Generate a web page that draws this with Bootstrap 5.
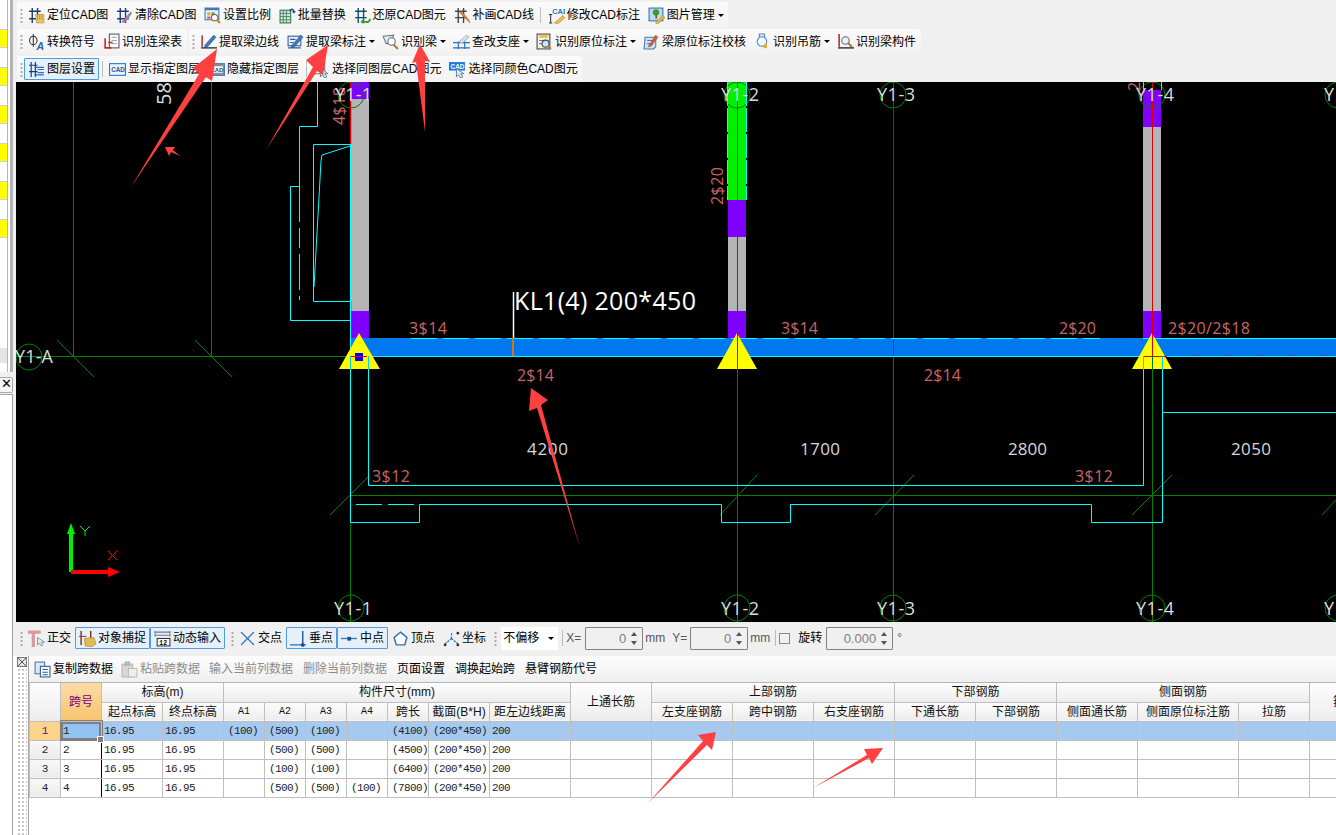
<!DOCTYPE html>
<html lang="zh">
<head>
<meta charset="utf-8">
<title>GCL</title>
<link href="https://cdn.jsdelivr.net/npm/bootstrap@5.3.0/dist/css/bootstrap.min.css" rel="stylesheet">
<style>
html,body{height:835px;overflow:hidden;background:#f0f0f0;}
body{font-family:"Liberation Sans","Noto Sans CJK SC",sans-serif;font-size:12px;color:#000;position:relative;}
.app{width:1336px;height:835px;}
/* left dock */
.dock{width:13px;flex:none;}
.dock-top{height:372px;border-right:3px solid #b4b4b4;box-shadow:inset -2px 0 0 #fff;position:relative;padding-right:3px;background:#fff;}
.dock-top::after{content:"";position:absolute;right:2px;top:0;bottom:0;width:1px;background:#b4b4b4;}
.yc{height:19px;background:#ff0;margin-bottom:19px;border-top:1px solid #d0d0d0;border-bottom:1px solid #d0d0d0;}
.yc:first-child{margin-top:29px;}
.gc{height:15px;background:#e4e4e4;margin-top:110px;}
.dock-x{height:16px;margin-top:5px;border:1px solid #a8a8a8;border-left:0;border-radius:0 2px 2px 0;background:#f4f4f4;line-height:12px;text-align:center;font-size:13px;}
.dock-low{flex:1;margin-top:1px;background:#fff;border-right:1px solid #a0a0a0;border-top:1px solid #a0a0a0;}
/* toolbars */
.main{flex:1;min-width:0;}
.rows{height:82px;padding:2px 0 0 4px;}
.tbar{background:linear-gradient(#fbfbfb,#f2f2f2);border-radius:3px;padding-left:3px;}
.h26{height:26px}.h25{height:25px}
.r1{width:711px;margin-bottom:1px}
.r1 .tool{margin-right:-.3px}
.r2a{width:170px}.r2b{width:732px;margin-left:2px}
.r2{margin-bottom:2px}
.r3{width:565px}
.grip{width:3px;height:15px;flex:none;margin-right:1px;background:radial-gradient(circle,#a8a8a8 1px,transparent 1.2px) 0 0/3px 4px;}
.tool.btn{--bs-btn-padding-x:3px;--bs-btn-padding-y:0;--bs-btn-font-size:12px;--bs-btn-border-radius:1px;--bs-btn-line-height:1;display:flex;align-items:center;gap:2px;height:22px;white-space:nowrap;color:#000;border:1px solid transparent;flex:none;}
.tool.on{border-color:#4f9ce6;background:#e6f0fb;}
.tool.off{color:#8c8c8c;}
.tool.dropdown-toggle{--bs-btn-padding-x:3px;padding-right:2px;}
.tool.dropdown-toggle::after{border-width:3px 3px 0;margin-left:1px;}
.ico{width:17px;height:17px;flex:none;display:block;}
.vsep{width:1px;height:16px;background:#bdbdbd;flex:none;margin:0 2.5px;}
/* cad */
.cad{display:block;margin-left:3px;width:1320px;height:540px;background:#000;font-family:"Open Sans","Noto Sans",sans-serif;}
.cad text{font-size:16px;fill:#c86464;}
.cad text.ax{font-size:18px;fill:#dcdcdc;}
.cad text.dm{font-size:17px;fill:#d8d8d8;}
.cad .gl{stroke:#008000;stroke-width:1;fill:none;}
.cad .cy{stroke:#00ffff;stroke-width:1;fill:none;}
.cad .rd{stroke:#d80000;stroke-width:1;fill:none;}
/* snap */
.snap{height:34px;padding:0 0 2px 0;}
.lbl{color:#555;flex:none;}
.gap2{margin-left:2px}.gap3{margin-left:3px}.gap6{margin-left:6px}.gap7{margin-left:7px}
.sep-a{margin:0 3px 0 4px;}
.sep-b{margin:0 3px 0 5px;}
.spin{height:23px;border:1px solid #828282;border-radius:1px;background:#f0f0f0;color:#808080;font-size:13px;padding-right:16px;text-align:right;line-height:21px;position:relative;flex:none;}
.spin::before,.spin::after{content:"";position:absolute;right:5px;border-left:3px solid transparent;border-right:3px solid transparent;}
.spin::before{top:4px;border-bottom:4px solid #555;}
.spin::after{bottom:4px;border-top:4px solid #555;}
.chk.form-check-input{width:11px;height:11px;margin:0;border-radius:0;border-color:#888;background-color:#f0f0f0;flex:none;}
.dropsel{width:57px;height:23px;background:#fff;padding-left:2px;flex:none;}
/* lower */
.lower{height:179px;background:#fff;}
.gutter{width:15px;flex:none;position:relative;padding:10px 1px 0 4px;}
.dots{position:absolute;left:4px;right:1px;top:12px;bottom:0;background:radial-gradient(circle,#c9c9c9 1px,transparent 1.1px) 0 0/4px 4px;}
.closeb{position:absolute;left:4px;top:1px;width:10px;height:10px;display:block;}
.tablepane{flex:1;min-width:0;overflow:hidden;border-left:1px solid #a8a8a8;}
.ttools{height:27px;background:linear-gradient(#fdfdfd,#efefef);border-bottom:1px solid #b4b4b4;margin-left:-1px;padding-left:2px;}
.ttools .tool.btn{height:20px;padding:0 3px;margin-right:2px;}
.ttools .tool.btn:first-child{margin-right:0;}
.ttools .tool.btn:nth-child(2){margin-right:1px;}
.gridbox{overflow:hidden;width:1307px;}
table.spans{table-layout:fixed;width:1351px;margin:0;border-collapse:collapse;font-size:12px;--bs-table-bg:transparent;}
table.spans th,table.spans td{height:19px;padding:0;border:1px solid #bfbfbf;line-height:18px;font-weight:400;white-space:nowrap;overflow:hidden;vertical-align:middle;}
table.spans thead th{background:linear-gradient(#fdfdfd,#ececec);text-align:center;color:#111;}
table.spans thead tr:first-child th{border-top:0;}
table.spans th.cur{background:linear-gradient(#fbdca6,#f5c46e);color:#800080;}
table.spans tbody th{background:linear-gradient(#f8f8f8,#ebebeb);text-align:center;font-family:"Liberation Mono",monospace;font-size:11px;line-height:17px;padding-top:1px;}
table.spans td{font-family:"Liberation Mono","Noto Sans CJK SC",monospace;font-size:11px;letter-spacing:-.6px;line-height:17px;padding:1px 0 0 2px;}
table.spans td.pn{padding-left:4px;}
table.spans .sel td{background:#a6c9ef;}
table.spans .sel th{background:#fbd38a;color:#800080;}
table.spans td.act{background:#92c2f2;box-shadow:inset 0 0 0 2px #7f7f7f;outline:1px solid #7f7f7f;outline-offset:0;position:relative;overflow:visible;z-index:2;}
table.spans td.act::after{content:"";position:absolute;right:-3px;bottom:-3px;width:5px;height:5px;background:#7f7f7f;border:1px solid #fff;box-sizing:content-box;}
table.spans td.blk{border-right:1px solid #000;}
.mini{font-family:"Liberation Mono",monospace;font-size:10px;font-weight:700;}
.overlay{position:absolute;left:0;top:0;pointer-events:none;z-index:5;}
</style>
</head>
<body>
<svg width="0" height="0" class="position-absolute">
<defs>
<symbol id="hand" viewBox="0 0 16 16"><path d="M4 1v14M9 1v14M1 4h11M1 11h11" stroke="#1d3a78" stroke-width="1.3" fill="none"/><path d="M7 7h8v8H8z" fill="#e8c868" stroke="#b89238" stroke-width=".6"/><path d="M9 7v5M11 7v5M13 7v5" stroke="#a8842c" stroke-width=".7"/></symbol>
<symbol id="brush" viewBox="0 0 16 16"><path d="M4 1v14M9 1v14M1 4h11M1 11h11" stroke="#1d3a78" stroke-width="1.3" fill="none"/><path d="M14 4 8 11l2 2 5-7z" fill="#8a8aa8"/><path d="M8 11l2 2-3 2-2-1z" fill="#d060a0"/></symbol>
<symbol id="ratio" viewBox="0 0 16 16"><rect x="1" y="1" width="13" height="11" fill="#eaf2fb" stroke="#3f78b8"/><rect x="1" y="1" width="13" height="2" fill="#3f78b8"/><rect x="3" y="5" width="3" height="3" fill="#e8a838"/><rect x="7" y="5" width="3" height="3" fill="#58a858"/><rect x="3" y="9" width="3" height="2" fill="#c85858"/><circle cx="10" cy="10" r="3" fill="#fff" stroke="#806020"/><path d="m12 12 3 3" stroke="#b88a2c" stroke-width="2"/></symbol>
<symbol id="batch" viewBox="0 0 16 16"><rect x="1" y="3" width="10" height="12" fill="#cfe8d8" stroke="#3c6f4f"/><path d="M1 6h10M1 9h10M1 12h10M4 3v12M7 3v12" stroke="#3c7f5f" stroke-width=".8"/><path d="M10 4c2-3 4-2 4 1" stroke="#0a4f7f" stroke-width="1.4" fill="none"/><path d="m12 4 2 2 2-2" fill="#0a4f7f"/></symbol>
<symbol id="restore" viewBox="0 0 16 16"><path d="M4 1v14M9 1v14M1 4h11M1 10h11" stroke="#0f4f68" stroke-width="1.3" fill="none"/><path d="M15 11a3 3 0 0 1-4 3H8" stroke="#3aa02a" stroke-width="1.8" fill="none"/><path d="m9 11-3 3 3 2z" fill="#3aa02a"/></symbol>
<symbol id="draw" viewBox="0 0 16 16"><path d="M4 1v14M9 1v14M1 4h11M1 10h11" stroke="#444" stroke-width="1.3" fill="none"/><path d="m5 5 8 8 2 2-1-3-7-8z" fill="#d88a3c" stroke="#8a5a24" stroke-width=".4"/></symbol>
<symbol id="cadmod" viewBox="0 0 16 16"><text x="4" y="6.5" font-size="7" font-weight="700" fill="#2a6fc0" font-family="Liberation Sans">CAD</text><path d="M1 7h3M2.500 7v8M1 15h3" stroke="#333" fill="none"/><path d="m6 15 8-7 2 2-7 6z" fill="#e8c050" stroke="#a88020" stroke-width=".5"/></symbol>
<symbol id="pic" viewBox="0 0 16 16"><rect x="1" y="1" width="13" height="12" fill="#bcd8f4" stroke="#3a6fb0"/><circle cx="7.500" cy="5" r="3" fill="#3a9a2a"/><rect x="7" y="7" width="1.500" height="4" fill="#7a5a2a"/><path d="m7 15 7-7 2 2-7 6z" fill="#e8b83c" stroke="#a07820" stroke-width=".5"/></symbol>
<symbol id="phi" viewBox="0 0 16 16"><path d="M5 1v12" stroke="#333"/><ellipse cx="5" cy="7" rx="3.500" ry="4" fill="none" stroke="#333"/><text x="8" y="16" font-size="10" font-weight="700" font-style="italic" fill="#2a62b8" font-family="Liberation Sans">A</text></symbol>
<symbol id="ltab" viewBox="0 0 16 16"><rect x="6" y="1" width="9" height="13" fill="#fff" stroke="#556"/><path d="M8 4h5M8 7h5M8 10h5" stroke="#89a" stroke-width=".9"/><path d="M2 5v9h6M5 9h4" stroke="#c8281c" stroke-width="1.5" fill="none"/></symbol>
<symbol id="edge" viewBox="0 0 16 16"><path d="M2 2v11" stroke="#b02020" stroke-width="1.300"/><path d="M1 14h15" stroke="#333" stroke-width="1.300"/><path d="m5 11 8-9 2 2-8 9-3 1z" fill="#3c7cc0" stroke="#1c4c88" stroke-width=".6"/></symbol>
<symbol id="mark" viewBox="0 0 16 16"><rect x="1" y="3" width="12" height="9" fill="#e8f0fa" stroke="#2c5c98"/><path d="M3 6h5M3 9h3M1 14h12" stroke="#2c5c98"/><path d="m5 11 8-9 2 2-8 9-3 1z" fill="#3c7cc0" stroke="#1c4c88" stroke-width=".6"/></symbol>
<symbol id="beamf" viewBox="0 0 16 16"><path d="m1 3 10-1-3 8-4 0z" fill="#e8eef4" stroke="#6a7a8a"/><circle cx="9" cy="8" r="3.500" fill="#fff" stroke="#5a6a7a"/><path d="m11 11 4 4" stroke="#b07c2c" stroke-width="2"/></symbol>
<symbol id="supp" viewBox="0 0 16 16"><path d="M0 9h16M0 14h16M5 8v7M11 8v7" stroke="#2a6fc0" stroke-width="1.100"/><path d="m6 8 7-6 2 2-7 6z" fill="#dfe4ea" stroke="#8a96a4" stroke-width=".7"/></symbol>
<symbol id="orig" viewBox="0 0 16 16"><rect x="1" y="1" width="12" height="14" fill="#f8f4e0" stroke="#444"/><rect x="3" y="2" width="8" height="2.500" fill="#e8c040"/><path d="M3 7h6M3 10h3" stroke="#778" /><circle cx="9" cy="10" r="3.300" fill="#cfe4f8" stroke="#3a4a5a"/><path d="m11 12 3 3" stroke="#b07c2c" stroke-width="2"/></symbol>
<symbol id="check" viewBox="0 0 16 16"><path d="M2 4h10v9l-2 2H1z" fill="#cfe0f4" stroke="#4a78b0"/><path d="M4 7h5M4 10h4" stroke="#4a78b0"/><path d="m6 11 6-9 2 2-6 8-3 1z" fill="#d85c38" stroke="#983c20" stroke-width=".5"/></symbol>
<symbol id="hang" viewBox="0 0 16 16"><path d="M5 1h5v3H5z" fill="#e4eef8" stroke="#5a86b8"/><circle cx="7.500" cy="8" r="4.500" fill="#f2f8ff" stroke="#5a86b8"/><circle cx="10.500" cy="12.500" r="2" fill="#e8b020"/></symbol>
<symbol id="comp" viewBox="0 0 16 16"><path d="M2 1v12" stroke="#b02020" stroke-width="1.400"/><path d="M1 14h15" stroke="#333" stroke-width="1.400"/><circle cx="8" cy="7" r="3.500" fill="#eaf2fa" stroke="#5a6a7a"/><path d="m10 9 4 4" stroke="#b07c2c" stroke-width="2"/></symbol>
<symbol id="layer" viewBox="0 0 16 16"><path d="M3 1v14M7 1v14M1 4h8M1 10h8" stroke="#1d3a78" stroke-width="1.100" fill="none"/><path d="M6 6h9M9 8h6M9 11h6M6 13h9" stroke="#2a6fc0" stroke-width="1.100"/></symbol>
<symbol id="cadb" viewBox="0 0 16 16"><rect x=".5" y="2.500" width="15" height="11" fill="#eaf4ff" stroke="#1e78d0"/><text x="2" y="10.500" font-size="6" font-weight="700" fill="#1e5aa0" font-family="Liberation Sans">CAD</text></symbol>
<symbol id="cadh" viewBox="0 0 16 16"><rect x=".5" y="2.500" width="15" height="11" fill="#8a9098" stroke="#4a78b0"/><rect x="2" y="5" width="12" height="6" fill="#fff"/><text x="2.500" y="10" font-size="5.500" font-weight="700" fill="#345" font-family="Liberation Sans">CAD</text></symbol>
<symbol id="sel1" viewBox="0 0 16 16"><rect x="1" y="1" width="10" height="11" fill="#f4f8fc" stroke="#6a7a8a"/><path d="M3 4h6M3 7h6" stroke="#c85050"/><path d="m7 6 0 9 2-2 2 3 2-1-2-3 3 0z" fill="#dfeaf6" stroke="#52708c" stroke-width=".8"/></symbol>
<symbol id="sel2" viewBox="0 0 16 16"><rect x="0" y="1" width="15" height="8" fill="#1e78e0"/><text x="1.500" y="7.500" font-size="6" font-weight="700" fill="#fff" font-family="Liberation Sans">CAD</text><path d="m7 7 0 8 2-2 2 3 2-1-2-3 3 0z" fill="#dfeaf6" stroke="#52708c" stroke-width=".8"/></symbol>
<symbol id="ortho" viewBox="0 0 16 16"><path d="M0 2h12M5 2v14" stroke="#d89a9a" stroke-width="3" fill="none"/><path d="m9 7 0 7 2-1.500 1.500 2.500 1.500-1-1.500-2.500h3z" fill="#e8eef4" stroke="#6a7684" stroke-width=".7"/></symbol>
<symbol id="osnap" viewBox="0 0 16 16"><path d="M2 1v13M11 1v7" stroke="#6a3010" stroke-width="1.300"/><path d="M0 6h7" stroke="#c03020" stroke-width="1"/><path d="m5 8 9-1 2 6-4 3-6-1z" fill="#e0bc58" stroke="#a08428" stroke-width=".6"/></symbol>
<symbol id="dyn" viewBox="0 0 16 16"><path d="M1 2h14M1 5h14M1 1v5M15 1v5" stroke="#778" fill="none"/><rect x="3" y="8" width="12" height="7" fill="#fff" stroke="#333"/><text x="5" y="14" font-size="6" font-family="Liberation Mono" font-weight="700">12</text></symbol>
<symbol id="xpt" viewBox="0 0 16 16"><path d="m2 2 12 12M14 2 2 14" stroke="#1f6fb8" stroke-width="1.300"/></symbol>
<symbol id="perp" viewBox="0 0 16 16"><path d="M0 14h15" stroke="#3a7ec0" stroke-width="1.300"/><path d="M12 1v13" stroke="#1f4f88" stroke-width="1.300"/><circle cx="12" cy="14" r="1.800" fill="#1f4f88"/></symbol>
<symbol id="midp" viewBox="0 0 16 16"><path d="M0 8h15" stroke="#3a7ec0" stroke-width="1.300"/><rect x="6" y="6.500" width="3.500" height="3.500" fill="#1f4f88"/></symbol>
<symbol id="vtx" viewBox="0 0 16 16"><path d="m8 2 6 5-2 7H4L2 7z" fill="#fff" stroke="#2a72bc" stroke-width="1.400"/></symbol>
<symbol id="coord" viewBox="0 0 16 16"><path d="M8 8V2M8 8l6 5M8 8l-6 5" stroke="#2a72bc" stroke-width="1.200" stroke-dasharray="2 1"/><circle cx="14" cy="3" r="1.300" fill="#333"/><circle cx="2" cy="14" r="1.300" fill="#333"/><circle cx="14" cy="14" r="1.300" fill="#333"/></symbol>
<symbol id="copy" viewBox="0 0 16 16"><rect x="1" y="1" width="9" height="11" fill="#dce8f6" stroke="#4a78b0"/><rect x="6" y="5" width="9" height="10" fill="#fff" stroke="#2a5a98"/><path d="M8 8h5M8 10.500h5M8 13h5" stroke="#2a5a98"/></symbol>
<symbol id="paste" viewBox="0 0 16 16"><rect x="1" y="3" width="10" height="12" fill="#d8d8d8" stroke="#b4b4b4"/><rect x="4" y="1" width="4" height="3" fill="#c4c4c4" stroke="#a8a8a8"/><rect x="7" y="7" width="8" height="8" fill="#eee" stroke="#bcbcbc"/></symbol>
</defs>
</svg>

<div class="app d-flex">
  <aside class="dock d-flex flex-column">
    <div class="dock-top">
      <div class="yc"></div><div class="yc"></div><div class="yc"></div><div class="yc"></div><div class="yc"></div><div class="yc"></div>
      <div class="gc"></div>
    </div>
    <div class="dock-x">✕</div>
    <div class="dock-low"></div>
  </aside>

  <div class="main d-flex flex-column">
    <div class="rows">
      <div class="tbar r1 h26 d-flex align-items-center">
        <span class="grip"></span>
        <button class="btn tool"><svg class="ico"><use href="#hand"/></svg>定位CAD图</button>
        <button class="btn tool"><svg class="ico"><use href="#brush"/></svg>清除CAD图</button>
        <button class="btn tool"><svg class="ico"><use href="#ratio"/></svg>设置比例</button>
        <button class="btn tool"><svg class="ico"><use href="#batch"/></svg>批量替换</button>
        <button class="btn tool"><svg class="ico"><use href="#restore"/></svg>还原CAD图元</button>
        <button class="btn tool"><svg class="ico"><use href="#draw"/></svg>补画CAD线</button>
        <span class="vsep"></span>
        <button class="btn tool"><svg class="ico"><use href="#cadmod"/></svg>修改CAD标注</button>
        <button class="btn tool dropdown-toggle"><svg class="ico"><use href="#pic"/></svg>图片管理</button>
      </div>
      <div class="r2 h25 d-flex">
        <div class="tbar r2a d-flex align-items-center">
          <span class="grip"></span>
          <button class="btn tool"><svg class="ico"><use href="#phi"/></svg>转换符号</button>
          <button class="btn tool"><svg class="ico"><use href="#ltab"/></svg>识别连梁表</button>
        </div>
        <div class="tbar r2b d-flex align-items-center">
          <span class="grip"></span>
          <button class="btn tool"><svg class="ico"><use href="#edge"/></svg>提取梁边线</button>
          <button class="btn tool dropdown-toggle"><svg class="ico"><use href="#mark"/></svg>提取梁标注</button>
          <button class="btn tool dropdown-toggle"><svg class="ico"><use href="#beamf"/></svg>识别梁</button>
          <button class="btn tool dropdown-toggle"><svg class="ico"><use href="#supp"/></svg>查改支座</button>
          <button class="btn tool dropdown-toggle"><svg class="ico"><use href="#orig"/></svg>识别原位标注</button>
          <button class="btn tool"><svg class="ico"><use href="#check"/></svg>梁原位标注校核</button>
          <button class="btn tool dropdown-toggle"><svg class="ico"><use href="#hang"/></svg>识别吊筋</button>
          <button class="btn tool"><svg class="ico"><use href="#comp"/></svg>识别梁构件</button>
        </div>
      </div>
      <div class="tbar r3 h26 d-flex align-items-center">
        <span class="grip"></span>
        <button class="btn tool on"><svg class="ico"><use href="#layer"/></svg>图层设置</button>
        <span class="vsep"></span>
        <button class="btn tool"><svg class="ico"><use href="#cadb"/></svg>显示指定图层</button>
        <button class="btn tool"><svg class="ico"><use href="#cadh"/></svg>隐藏指定图层</button>
        <span class="vsep"></span>
        <button class="btn tool"><svg class="ico"><use href="#sel1"/></svg>选择同图层CAD图元</button>
        <button class="btn tool"><svg class="ico"><use href="#sel2"/></svg>选择同颜色CAD图元</button>
      </div>
    </div>

    <svg class="cad" viewBox="16 82 1320 540" xmlns="http://www.w3.org/2000/svg">
      <rect x="351" y="338" width="985" height="18" fill="#0078f0"/>
      <rect x="351" y="99" width="18" height="212" fill="#b4b4b4"/>
      <rect x="351" y="82" width="18" height="17" fill="#7f00ff"/>
      <rect x="351" y="311" width="18" height="27" fill="#7f00ff"/>
      <rect x="728" y="82" width="18" height="118" fill="#00f000"/>
      <rect x="728" y="200" width="18" height="37" fill="#7f00ff"/>
      <rect x="728" y="237" width="18" height="74" fill="#b4b4b4"/>
      <rect x="728" y="311" width="18" height="27" fill="#7f00ff"/>
      <rect x="1143" y="90" width="18" height="37" fill="#7f00ff"/>
      <rect x="1143" y="127" width="18" height="184" fill="#b4b4b4"/>
      <rect x="1143" y="311" width="18" height="27" fill="#7f00ff"/>
      <g class="gl">
        <path d="M16 356.500H351M73.500 82V356M211.500 82V356M57 340l37 37M195 340l37 37"/>
        <path d="M351 495.500H1336M350.500 400V622M737.500 356V622M893.500 356V622M1152.500 356V622"/>
        <path d="M330 515l38-38M720 515l37-40M875 515l39-40M1132 515l40-40M1322 515l14-15"/>
        <circle cx="29" cy="357" r="13"/><circle cx="351" cy="95" r="13"/><circle cx="737" cy="95" r="13"/><circle cx="893" cy="95" r="13"/><circle cx="1152" cy="95" r="13"/>
        <circle cx="351" cy="608" r="13"/><circle cx="737" cy="608" r="13"/><circle cx="893" cy="608" r="13"/><circle cx="1152" cy="608" r="13"/><circle cx="1338" cy="608" r="13"/><circle cx="1338" cy="95" r="13"/>
      </g>
      <g class="rd">
        <path d="M350.500 82V144M350.500 301V320" stroke-width="1.500"/>
        <path d="M737.500 82V356M893.500 82V356M1152.500 82V356M1143 356.500H1167"/>
        <path d="M351 356.500H367M1193 356.500h6M1225 356.500h6M1257 356.500h6M1289 356.500h6M1321 356.500h6" stroke-width="1.300"/>
      </g>
      <g class="cy">
        <path d="M317.500 82V126.500H299.500V186"/>
        <path d="M299.500 186V300" stroke-dasharray="36 6 20 6"/>
        <path d="M299.500 186.500H290.500V320.500H350.500"/>
        <path d="M350.500 144.500H313.500V301.500H350.500M350.500 144V338"/>
        <path d="M350 146 322 155 321 161 320 179 319 197 318 215 317 233 316 251 315 269 314 287"/>
        <path d="M350.500 320V522.500H419.500V504.500H721.500V522.500H790.500V504.500M368.500 356V485.500H1143.500V356M1162.500 356V522.500H1091.500V504.500H790M1162.500 412.500H1336"/>
        <path d="M356 504.500h26M388 504.500h26" />
        <path d="M411 338.500H1100" stroke-dasharray="26 6"/>
        <path d="M1143 338.500H1336M351 356.500H1336"/>
        <path d="M727.500 82V200M746.500 82V200" stroke-dasharray="24 2"/>
        <path d="M1143.500 82V90M1161.500 82V90"/>
      </g>
      <rect x="734" y="503" width="6" height="3" fill="#000"/><rect x="766" y="503" width="6" height="3" fill="#000"/>
      <rect x="1118" y="503" width="6" height="3" fill="#000"/><rect x="1150" y="503" width="6" height="3" fill="#000"/>
      <path d="M737.500 495.500v12M1152.500 495.500v12" stroke="#008000"/>
      <path d="M359 333 380 369H339ZM737 333 757 369H717ZM1152 333 1172 369H1132Z" fill="#ffff00"/>
      <rect x="355" y="353" width="8" height="8" fill="#0000ff"/>
      <path d="M351 356.500H367M1143 356.500H1167M1152.500 333V356" stroke="#e00000"/>
      <path d="M737.500 333V356" stroke="#d80000"/>
      <path d="M737.500 356V369M1152.500 356V369" stroke="#007a28"/>
      <path d="M368.500 356V369M350.500 356V369M1143.500 356V369M1162.500 356V369" stroke="#00d8d8"/>
      <path d="M513.500 292V338" stroke="#fff" stroke-width="1.500"/>
      <path d="M513 338V356" stroke="#e87000" stroke-width="2"/>
      <path d="M71 572V530" stroke="#00f000" stroke-width="4"/><path d="M71 523 75 534H67Z" fill="#00f000"/>
      <path d="M71 572H112" stroke="#ff0000" stroke-width="4"/><path d="M120 572 108 567V577Z" fill="#ff0000"/>
      <path d="M80 526l5 5 5-5M85 531v5" stroke="#00f000" fill="none"/>
      <path d="M108 551l9 9M117 551l-9 9" stroke="#ff0000" fill="none"/>
      <text x="514" y="310" style="font-size:25px;fill:#fff" textLength="182">KL1(4) 200*450</text>
      <text x="409" y="334" textLength="38">3$14</text>
      <text x="517" y="381" textLength="37">2$14</text>
      <text x="781" y="334" textLength="37">3$14</text>
      <text x="1059" y="334" textLength="37">2$20</text>
      <text x="1168" y="334" textLength="82">2$20/2$18</text>
      <text x="924" y="381" textLength="37">2$14</text>
      <text x="372" y="482" textLength="38">3$12</text>
      <text x="1075" y="482" textLength="38">3$12</text>
      <text class="dm" x="527" y="455" textLength="41">4200</text>
      <text class="dm" x="800" y="455" textLength="40">1700</text>
      <text class="dm" x="1008" y="455" textLength="39">2800</text>
      <text class="dm" x="1231" y="455" textLength="40">2050</text>
      <text transform="translate(345 125) rotate(-90)" textLength="38">4$18</text>
      <text transform="translate(723 205) rotate(-90)" textLength="38">2$20</text>
      <text transform="translate(1140 91) rotate(-90)">2</text>
      <text class="ax" style="font-size:20px" transform="translate(171 105) rotate(-90)">58</text>
      <text class="ax" x="15" y="363" textLength="38">Y1-A</text>
      <text class="ax" x="335" y="101" textLength="37">Y1-1</text>
      <text class="ax" x="721" y="101" textLength="38">Y1-2</text>
      <text class="ax" x="877" y="101" textLength="38">Y1-3</text>
      <text class="ax" x="1136" y="101" textLength="38">Y1-4</text>
      <text class="ax" x="1324" y="101">Y</text>
      <text class="ax" x="334" y="615" textLength="38">Y1-1</text>
      <text class="ax" x="721" y="615" textLength="38">Y1-2</text>
      <text class="ax" x="877" y="615" textLength="38">Y1-3</text>
      <text class="ax" x="1136" y="615" textLength="38">Y1-4</text>
      <text class="ax" x="1324" y="615">Y</text>
    </svg>

    <div class="snap d-flex align-items-center">
      <span class="grip gap7"></span>
      <button class="btn tool"><svg class="ico"><use href="#ortho"/></svg>正交</button>
      <button class="btn tool on"><svg class="ico"><use href="#osnap"/></svg>对象捕捉</button>
      <button class="btn tool on"><svg class="ico"><use href="#dyn"/></svg>动态输入</button>
      <span class="grip gap6"></span>
      <button class="btn tool"><svg class="ico"><use href="#xpt"/></svg>交点</button>
      <button class="btn tool on"><svg class="ico"><use href="#perp"/></svg>垂点</button>
      <button class="btn tool on"><svg class="ico"><use href="#midp"/></svg>中点</button>
      <button class="btn tool"><svg class="ico"><use href="#vtx"/></svg>顶点</button>
      <button class="btn tool"><svg class="ico"><use href="#coord"/></svg>坐标</button>
      <span class="grip ms-1"></span>
      <div class="dropsel dropdown-toggle d-flex align-items-center justify-content-between gap3 pe-1">不偏移</div>
      <span class="vsep sep-a"></span>
      <span class="lbl">X=</span>
      <div class="spin ms-1" style="width:58px">0</div>
      <span class="lbl gap2">mm</span>
      <span class="lbl gap7">Y=</span>
      <div class="spin gap3" style="width:58px">0</div>
      <span class="lbl gap2">mm</span>
      <span class="vsep sep-b"></span>
      <input class="form-check-input chk" type="checkbox" aria-label="旋转">
      <span class="ms-2">旋转</span>
      <div class="spin ms-1" style="width:67px">0.000</div>
      <span class="lbl ms-1">°</span>
    </div>

    <div class="lower d-flex">
      <div class="gutter">
        <svg class="closeb" viewBox="0 0 10 10"><rect x=".5" y=".5" width="9" height="9" fill="#e6e6e6" stroke="#777"/><path d="m1 1 8 8M9 1 1 9" stroke="#555"/></svg>
        <span class="dots"></span>
      </div>
      <div class="tablepane">
        <div class="ttools d-flex align-items-center">
          <button class="btn tool"><svg class="ico"><use href="#copy"/></svg>复制跨数据</button>
          <button class="btn tool off"><svg class="ico"><use href="#paste"/></svg>粘贴跨数据</button>
          <button class="btn tool off">输入当前列数据</button>
          <button class="btn tool off">删除当前列数据</button>
          <button class="btn tool">页面设置</button>
          <button class="btn tool">调换起始跨</button>
          <button class="btn tool">悬臂钢筋代号</button>
        </div>
        <div class="gridbox">
          <table class="table spans">
            <colgroup>
              <col style="width:31px"><col style="width:41px"><col style="width:61px"><col style="width:61px">
              <col style="width:41px"><col style="width:41px"><col style="width:41px"><col style="width:41px"><col style="width:41px">
              <col style="width:61px"><col style="width:81px"><col style="width:81px">
              <col style="width:81px"><col style="width:81px"><col style="width:81px">
              <col style="width:81px"><col style="width:81px">
              <col style="width:81px"><col style="width:101px"><col style="width:71px">
              <col style="width:71px">
            </colgroup>
            <thead>
              <tr>
                <th rowspan="2"></th><th rowspan="2" class="cur">跨号</th>
                <th colspan="2">标高(m)</th><th colspan="7">构件尺寸(mm)</th>
                <th rowspan="2">上通长筋</th><th colspan="3">上部钢筋</th><th colspan="2">下部钢筋</th><th colspan="3">侧面钢筋</th>
                <th rowspan="2">箍筋</th>
              </tr>
              <tr>
                <th>起点标高</th><th>终点标高</th>
                <th class="mini">A1</th><th class="mini">A2</th><th class="mini">A3</th><th class="mini">A4</th>
                <th>跨长</th><th>截面(B*H)</th><th>距左边线距离</th>
                <th>左支座钢筋</th><th>跨中钢筋</th><th>右支座钢筋</th>
                <th>下通长筋</th><th>下部钢筋</th>
                <th>侧面通长筋</th><th>侧面原位标注筋</th><th>拉筋</th>
              </tr>
            </thead>
            <tbody>
              <tr class="sel"><th>1</th><td class="act">1</td><td>16.95</td><td>16.95</td><td class="pn">(100)</td><td class="pn">(500)</td><td class="pn">(100)</td><td></td><td class="pn">(4100)</td><td class="pn">(200*450)</td><td>200</td><td></td><td></td><td></td><td></td><td></td><td></td><td></td><td></td><td></td><td></td></tr>
              <tr><th>2</th><td class="blk">2</td><td>16.95</td><td>16.95</td><td></td><td class="pn">(500)</td><td class="pn">(500)</td><td></td><td class="pn">(4500)</td><td class="pn">(200*450)</td><td>200</td><td></td><td></td><td></td><td></td><td></td><td></td><td></td><td></td><td></td><td></td></tr>
              <tr><th>3</th><td class="blk">3</td><td>16.95</td><td>16.95</td><td></td><td class="pn">(100)</td><td class="pn">(100)</td><td></td><td class="pn">(6400)</td><td class="pn">(200*450)</td><td>200</td><td></td><td></td><td></td><td></td><td></td><td></td><td></td><td></td><td></td><td></td></tr>
              <tr><th>4</th><td class="blk">4</td><td>16.95</td><td>16.95</td><td></td><td class="pn">(500)</td><td class="pn">(500)</td><td class="pn">(100)</td><td class="pn">(7800)</td><td class="pn">(200*450)</td><td>200</td><td></td><td></td><td></td><td></td><td></td><td></td><td></td><td></td><td></td><td></td></tr>
            </tbody>
          </table>
        </div>
      </div>
    </div>
  </div>
</div>

<svg class="overlay" width="1336" height="835" viewBox="0 0 1336 835" aria-hidden="true">
  <g fill="#ff4040">
    <path d="M131 187 199 74 193 68 217 49 212 81 206 77Z"/>
    <path d="M266 150 313 67 306 60 328 45 323 75 317 71Z"/>
    <path d="M425 132 416 62 412 63 420 44 430 62 425 61Z"/>
    <path d="M165 147 175 147 173 150 180 156 171 152 169 156Z"/>
    <path d="M580 548 537 408 529 411 531 388 548 400 541 405Z"/>
    <path d="M648 803 703 741 698 735 716 732 712 750 707 745Z"/>
    <path d="M813 788 867 755 864 749 883 748 872 764 869 758Z"/>
  </g>
</svg>
<script src="https://cdn.jsdelivr.net/npm/bootstrap@5.3.0/dist/js/bootstrap.bundle.min.js"></script>
</body>
</html>
